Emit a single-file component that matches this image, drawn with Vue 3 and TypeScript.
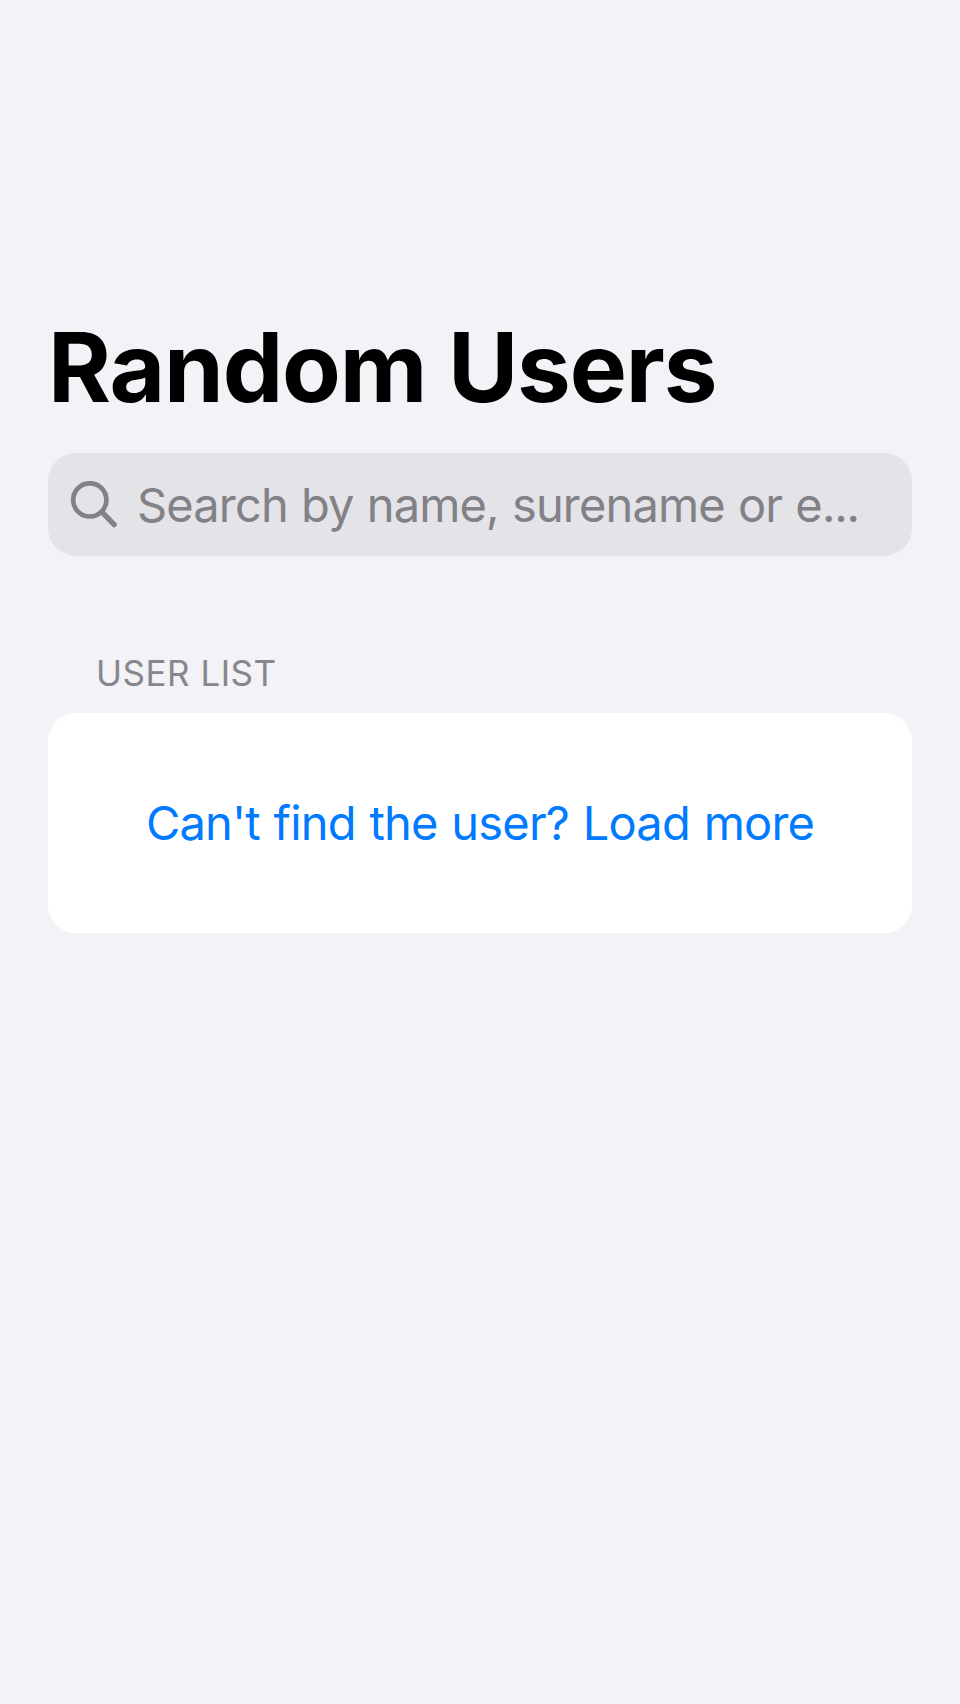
<script setup lang="ts">
const title: string = 'Random Users'
const placeholder: string = 'Search by name, surename or e'
const sectionTitle: string = 'USER LIST'
const loadMore: string = "Can't find the user? Load more"
</script>

<template>
  <main class="screen">
    <h1 class="title">{{ title }}</h1>
    <div class="search">
      <svg class="search-icon" viewBox="0 0 48 48" fill="none" stroke="currentColor" stroke-linecap="round">
        <circle cx="19.8" cy="18.9" r="16.6" stroke-width="4.7" />
        <path d="M32 31.2 44.2 43.6" stroke-width="5.3" />
      </svg>
      <span class="placeholder">{{ placeholder }}<span class="dots">...</span></span>
    </div>
    <section class="section">
      <h2 class="section-title">{{ sectionTitle }}</h2>
      <div class="card">
        <button class="load-more" type="button">{{ loadMore }}</button>
      </div>
    </section>
  </main>
</template>

<style>
body {
  background: #f2f2f7;
}
</style>

<style scoped>
.screen {
  box-sizing: border-box;
  min-height: 1704px;
  padding: 309px 48px 0;
  background: #f2f2f7;
  font-family: Inter, 'Noto Sans', sans-serif;
}
.title {
  margin: 0;
  font-size: 96px;
  font-weight: 700;
  line-height: 116px;
  letter-spacing: -1.12px;
  color: #000;
  white-space: nowrap;
}
.search {
  display: flex;
  align-items: center;
  box-sizing: border-box;
  height: 103px;
  margin-top: 28px;
  padding: 0 22px;
  border-radius: 28px;
  background: #e3e3e8;
  color: #828186;
}
.search-icon {
  flex: none;
  width: 48px;
  height: 48px;
}
.placeholder {
  margin-left: 19px;
  font-size: 47px;
  line-height: 60px;
  letter-spacing: -0.85px;
  word-spacing: 0.8px;
  white-space: nowrap;
}
.dots {
  letter-spacing: -1.2px;
}
.section {
  margin-top: 96px;
}
.section-title {
  margin: 0;
  padding: 0 48px;
  font-size: 35px;
  font-weight: 400;
  line-height: 42px;
  letter-spacing: 0.5px;
  color: #87868b;
}
.card {
  display: flex;
  align-items: center;
  justify-content: center;
  height: 220px;
  margin-top: 19px;
  border-radius: 28px;
  background: #fff;
}
.load-more {
  padding: 0;
  border: 0;
  background: none;
  font-family: inherit;
  font-size: 47px;
  line-height: 60px;
  letter-spacing: -0.82px;
  word-spacing: 1.4px;
  color: #007aff;
  white-space: nowrap;
}
</style>
